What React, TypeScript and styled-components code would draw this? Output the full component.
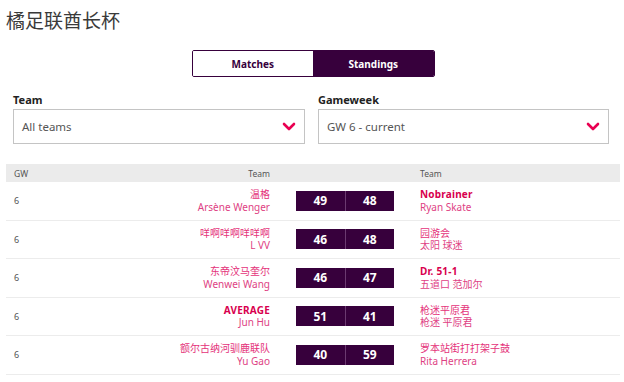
import React from 'react'
import styled, { createGlobalStyle } from 'styled-components'

const GlobalStyle = createGlobalStyle`
  body {
    margin: 0;
    background: #fff;
    font-family: 'Noto Sans', 'Noto Sans CJK SC', sans-serif;
  }
`

const Page = styled.div`
  width: 614px;
  padding: 7px 6px 0 6px;
`

const Title = styled.h1`
  margin: 0;
  font-family: 'Noto Sans CJK SC', sans-serif;
  font-weight: 400;
  font-size: 19px;
  line-height: 26px;
  color: #3a3a3a;
`

const Toggle = styled.div`
  display: flex;
  width: 243px;
  height: 27px;
  margin: 17px auto 0;
  border: 1px solid #37003c;
  border-radius: 2px;
  box-sizing: border-box;
  overflow: hidden;
`

const ToggleButton = styled.button<{ $active?: boolean }>`
  flex: 1;
  border: none;
  padding: 0;
  font-family: inherit;
  font-size: 10px;
  font-weight: 700;
  background: ${(p) => (p.$active ? '#37003c' : '#fff')};
  color: ${(p) => (p.$active ? '#fff' : '#37003c')};
`

const Filters = styled.div`
  display: grid;
  grid-template-columns: 292px 291px;
  column-gap: 13px;
  padding: 0 7px;
  margin-top: 15px;
`

const Field = styled.div`
  display: flex;
  flex-direction: column;
`

const Label = styled.label`
  font-size: 11px;
  font-weight: 700;
  line-height: 16px;
  color: #222;
  margin-bottom: 1px;
`

const SelectBox = styled.div`
  display: flex;
  align-items: center;
  justify-content: space-between;
  height: 35px;
  box-sizing: border-box;
  padding: 0 8px 0 8px;
  border: 1px solid #c4c4c4;
  font-size: 11.5px;
  color: #555;
`

const Chevron = () => (
  <svg width="14" height="9" viewBox="0 0 14 9">
    <path d="M2 2 L7 7 L12 2" fill="none" stroke="#e90052" strokeWidth="2.6" strokeLinecap="round" strokeLinejoin="round" />
  </svg>
)

const Table = styled.div`
  margin-top: 20px;
`

const Grid = styled.div`
  display: grid;
  grid-template-columns: 26px 204px 98px 1fr;
  column-gap: 26px;
  align-items: center;
  padding: 0 8px;
`

const HeadRow = styled(Grid)`
  height: 18px;
  background: #ebebeb;
  font-size: 8.5px;
  color: #555;
`

const BodyRow = styled(Grid)`
  height: 38.5px;
  box-sizing: border-box;
  border-bottom: 1px solid #ececec;
`

const HeadCell = styled.div<{ $right?: boolean }>`
  text-align: ${(p) => (p.$right ? 'right' : 'left')};
`

const Gw = styled.div`
  font-size: 9px;
  color: #555;
`

const Entry = styled.div<{ $right?: boolean }>`
  display: flex;
  flex-direction: column;
  align-items: ${(p) => (p.$right ? 'flex-end' : 'flex-start')};
  line-height: 12.5px;
`

const TeamName = styled.span<{ $bold?: boolean }>`
  font-size: 10px;
  font-weight: ${(p) => (p.$bold ? 700 : 400)};
  color: ${(p) => (p.$bold ? '#d8004e' : '#e4327a')};
  letter-spacing: ${(p) => (p.$bold ? '0.2px' : '0')};
`

const Manager = styled.span`
  font-size: 10px;
  color: #de3f84;
`

const Score = styled.div`
  display: flex;
  height: 20px;
  background: #37003c;
`

const ScoreCell = styled.div`
  flex: 1;
  display: flex;
  align-items: center;
  justify-content: center;
  color: #fff;
  font-size: 12px;
  font-weight: 700;
  & + & {
    border-left: 1px solid #6b3a70;
  }
`

type Side = { team: string; manager: string; bold?: boolean }
type Match = { gw: number; home: Side; away: Side; score: [number, number] }

const matches: Match[] = [
  {
    gw: 6,
    home: { team: '温格', manager: 'Arsène Wenger' },
    away: { team: 'Nobrainer', manager: 'Ryan Skate', bold: true },
    score: [49, 48],
  },
  {
    gw: 6,
    home: { team: '咩啊咩啊咩咩啊', manager: 'L VV' },
    away: { team: '园游会', manager: '太阳 球迷' },
    score: [46, 48],
  },
  {
    gw: 6,
    home: { team: '东帝汶马奎尔', manager: 'Wenwei Wang' },
    away: { team: 'Dr. 51-1', manager: '五道口 范加尔', bold: true },
    score: [46, 47],
  },
  {
    gw: 6,
    home: { team: 'AVERAGE', manager: 'Jun Hu', bold: true },
    away: { team: '枪迷平原君', manager: '枪迷 平原君' },
    score: [51, 41],
  },
  {
    gw: 6,
    home: { team: '额尔古纳河驯鹿联队', manager: 'Yu Gao' },
    away: { team: '罗本站街打打架子鼓', manager: 'Rita Herrera' },
    score: [40, 59],
  },
]

const App: React.FC = () => (
  <>
    <GlobalStyle />
    <Page>
      <Title>橘足联酋长杯</Title>
      <Toggle>
        <ToggleButton>Matches</ToggleButton>
        <ToggleButton $active>Standings</ToggleButton>
      </Toggle>

      <Filters>
        <Field>
          <Label>Team</Label>
          <SelectBox>
            All teams
            <Chevron />
          </SelectBox>
        </Field>
        <Field>
          <Label>Gameweek</Label>
          <SelectBox>
            GW 6 - current
            <Chevron />
          </SelectBox>
        </Field>
      </Filters>

      <Table>
        <HeadRow>
          <HeadCell>GW</HeadCell>
          <HeadCell $right>Team</HeadCell>
          <HeadCell />
          <HeadCell>Team</HeadCell>
        </HeadRow>
        {matches.map((m, i) => (
          <BodyRow key={i}>
            <Gw>{m.gw}</Gw>
            <Entry $right>
              <TeamName $bold={m.home.bold}>{m.home.team}</TeamName>
              <Manager>{m.home.manager}</Manager>
            </Entry>
            <Score>
              <ScoreCell>{m.score[0]}</ScoreCell>
              <ScoreCell>{m.score[1]}</ScoreCell>
            </Score>
            <Entry>
              <TeamName $bold={m.away.bold}>{m.away.team}</TeamName>
              <Manager>{m.away.manager}</Manager>
            </Entry>
          </BodyRow>
        ))}
      </Table>
    </Page>
  </>
)

export default App
